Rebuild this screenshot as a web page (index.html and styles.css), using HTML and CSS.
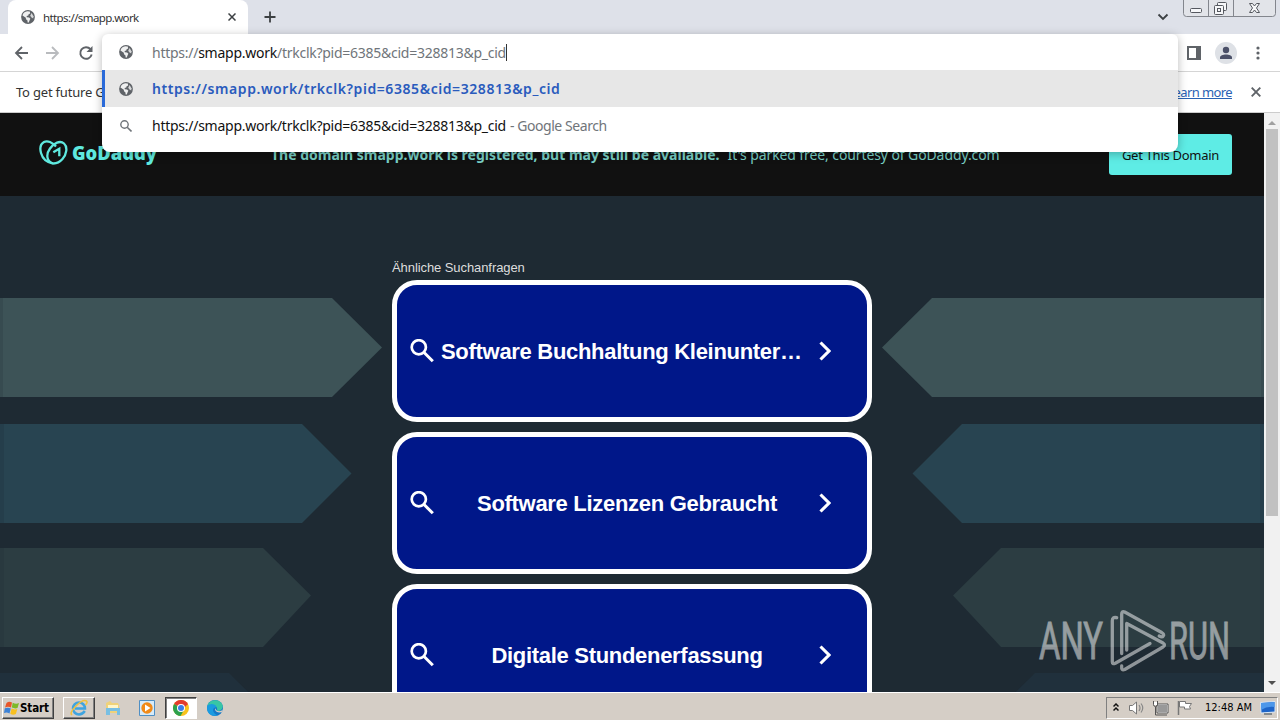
FILE: index.html
```html
<!DOCTYPE html>
<html lang="de">
<head>
    <meta charset="UTF-8">
    <meta name="viewport" content="width=device-width, initial-scale=1.0">
    <title>smapp.work</title>
    <link rel="stylesheet" href="styles.css">
</head>
<body>
    <!-- shared icons -->
    <svg class="defs" width="0" height="0">
        <symbol id="globe" viewBox="0 0 14 14">
            <circle cx="7" cy="7" r="6.9" fill="#5f6368"/>
            <path d="M6.2 1.3 8.8 1.6 9.2 3.4 7.6 4.3 7.3 5.6 5.6 6 5.8 7.2 8.1 7.4 9.4 8.7 8.7 10 7.8 12.6 6.6 12.6 6.5 10.6 5 9.2 4.8 7.7 1.5 5.4C2 3.3 3.9 1.5 6.2 1.3z" fill="#fff" fill-opacity=".9"/>
            <path d="M10.6 3 12.5 6.2 12.2 8.4 10.5 7.6 9.2 5.8z" fill="#fff" fill-opacity=".75"/>
        </symbol>
        <symbol id="search" viewBox="0 0 24 24">
            <circle cx="8.8" cy="8.3" r="7.1" fill="none" stroke="currentColor" stroke-width="2.7"/>
            <path d="M13.800 13.300l9 9" stroke="currentColor" stroke-width="3"/>
        </symbol>
        <symbol id="chevron" viewBox="0 0 12 20">
            <path d="M1.5 1.5 10 10 1.5 18.5" fill="none" stroke="currentColor" stroke-width="3.1"/>
        </symbol>
    </svg>

    <div class="browser">
        <div class="tabstrip">
            <div class="tab">
                <svg class="tab-icon" width="14" height="14"><use href="#globe"/></svg>
                <span class="tab-title">https://smapp.work</span>
                <svg class="tab-close" width="8" height="8" viewBox="0 0 8 8"><path d="M.5.5l7 7M7.5.5l-7 7" stroke="#3c4043" stroke-width="1.5"/></svg>
            </div>
            <svg class="new-tab" width="12" height="12" viewBox="0 0 12 12"><path d="M6 .5v11M.5 6h11" stroke="#3c4043" stroke-width="1.8"/></svg>
            <svg class="tab-search" width="12" height="8" viewBox="0 0 12 8"><path d="M1.5 1.5 6 6l4.500-4.500" fill="none" stroke="#3c4043" stroke-width="1.8"/></svg>
            <svg class="window-buttons" width="94" height="18" viewBox="0 0 94 18">
                <path d="M.5 0v13.500q0 3 3 3h86q3 0 3-3V0M25.500 0v16M50.500 0v16" fill="#e2e4e9" stroke="#83868d"/>
                <g fill="#f6f7f9" stroke="#55585f">
                    <rect x="7.500" y="8.500" width="11" height="4" rx="1"/>
                    <rect x="34.500" y="2.500" width="9" height="8" rx="1"/>
                    <rect x="31.500" y="5.500" width="9" height="9" rx="1"/>
                    <rect x="34.500" y="8.500" width="3" height="3"/>
                    <path d="M66.500 3.500h3l2 2.500 2-2.500h3l-3 4.500 3 4.500h-3l-2-2.500-2 2.500h-3l3-4.500z"/>
                </g>
            </svg>
        </div>

        <div class="toolbar">
            <svg class="nav-icons" width="80" height="16" viewBox="0 0 80 16">
                <path d="M14 8H2M8 2 2 8l6 6" fill="none" stroke="#5f6368" stroke-width="1.8"/>
                <path d="M32 8h12M38 2l6 6-6 6" fill="none" stroke="#b9bbbe" stroke-width="1.800"/>
                <path d="M76.500 4.200A5.800 5.800 0 1 0 77.700 9.500" fill="none" stroke="#5f6368" stroke-width="1.900"/>
                <path d="M78.500 1v6h-6z" fill="#5f6368"/>
            </svg>
            <div class="toolbar-right">
                <svg width="14" height="14" viewBox="0 0 14 14"><path d="M1 1h12v12H1z" fill="#fff" stroke="#5f6368" stroke-width="2"/><path d="M9 0h5v14H9z" fill="#5f6368"/></svg>
                <svg width="22" height="22" viewBox="0 0 22 22"><circle cx="11" cy="11" r="11" fill="#dee1e6"/><circle cx="11" cy="8" r="3.200" fill="#4b5068"/><path d="M5 17v-1.500c0-4 12-4 12 0V17z" fill="#4b5068"/></svg>
                <svg width="4" height="14" viewBox="0 0 4 14" fill="#5f6368"><circle cx="2" cy="2" r="1.600"/><circle cx="2" cy="7" r="1.600"/><circle cx="2" cy="12" r="1.600"/></svg>
            </div>
        </div>

        <div class="infobar">
            <span class="info-text">To get future G</span>
            <a class="learn-more" href="#">Learn more</a>
            <svg width="10" height="10" viewBox="0 0 10 10"><path d="M.7.7l8.600 8.600M9.300.7.7 9.300" stroke="#5f6368" stroke-width="1.900"/></svg>
        </div>

        <div class="viewport">
            <div class="page">
                <div class="banner">
                    <svg class="godaddy" width="120" height="28" viewBox="0 0 120 28">
                        <g fill="none" stroke="#5fe9df" stroke-width="2.300">
                            <path d="M14.500 23.500C7 21.500 7 14 11 8.500S21 0 25 3.500s2.500 11-1.500 15.500-9 4.500-9 4.500z"/>
                            <path d="M14 23.500C8 22.500 3.500 18.500 2 13S1.500 4 5 2s8.500.5 12 4.500"/>
                            <path d="M14.300 12.200l6-3.500v7.500"/>
                        </g>
                        <text class="godaddy-name" x="33" y="20" textLength="85" lengthAdjust="spacingAndGlyphs">GoDaddy</text>
                    </svg>
                    <p class="notice"><strong>The domain smapp.work is registered, but may still be available.</strong><span>It's parked free, courtesy of GoDaddy.com</span></p>
                    <a class="get-domain" href="#">Get This Domain</a>
                </div>

                <div class="content">
                    <svg class="arrows" width="1264" height="496" viewBox="0 0 1264 496">
                        <g id="left-arrows">
                            <path d="M0 102h332l50 49.500-50 49.500H0z" fill="#3d5357"/>
                            <path d="M0 228h302l49.500 49.500L302 327H0z" fill="#284451"/>
                            <path d="M0 352h263l48 47.500-48 51.500H0z" fill="#2c3d42"/>
                            <path d="M0 477h229l50 49.500H0z" fill="#20303c"/>
                            <path d="M0 102h3v99H0zM0 228h4v99H0zM0 352h4v99H0z" fill="#1e2931" fill-opacity=".18"/>
                        </g>
                        <use href="#left-arrows" transform="translate(1264 0) scale(-1 1)"/>
                    </svg>
                    <div class="related">
                        <div class="related-title">Ähnliche Suchanfragen</div>
                        <a class="card" href="#">
                            <svg width="24" height="24"><use href="#search"/></svg>
                            <span class="long">Software Buchhaltung Kleinunter…</span>
                            <svg width="12" height="20"><use href="#chevron"/></svg>
                        </a>
                        <a class="card" href="#">
                            <svg width="24" height="24"><use href="#search"/></svg>
                            <span>Software Lizenzen Gebraucht</span>
                            <svg width="12" height="20"><use href="#chevron"/></svg>
                        </a>
                        <a class="card" href="#">
                            <svg width="24" height="24"><use href="#search"/></svg>
                            <span>Digitale Stundenerfassung</span>
                            <svg width="12" height="20"><use href="#chevron"/></svg>
                        </a>
                    </div>
                </div>
            </div>
            <div class="scrollbar">
                <svg width="8" height="4" viewBox="0 0 8 4"><path d="M0 4l4-4 4 4z" fill="#a0a0a0"/></svg>
                <div class="thumb"></div>
                <svg class="down" width="8" height="4" viewBox="0 0 8 4"><path d="M0 0l4 4 4-4z" fill="#505050"/></svg>
            </div>
        </div>

        <!-- address bar with suggestions -->
        <div class="omnibox">
            <div class="suggestion input-row">
                <svg width="14" height="14"><use href="#globe"/></svg>
                <span class="url"><i>https://</i>smapp.work<i>/trkclk?pid=6385&amp;cid=328813&amp;p_cid</i></span><span class="caret"></span>
            </div>
            <div class="suggestion selected">
                <svg width="14" height="14"><use href="#globe"/></svg>
                <span class="url">https://smapp.work/trkclk?pid=6385&amp;cid=328813&amp;p_cid</span>
            </div>
            <div class="suggestion">
                <svg class="gray" width="12" height="12" viewBox="0 0 12 12"><circle cx="4.500" cy="4.500" r="3.700" fill="none" stroke="#70757a" stroke-width="1.400"/><path d="M7.200 7.200l4.300 4.300" stroke="#70757a" stroke-width="1.600"/></svg>
                <span class="url">https://smapp.work/trkclk?pid=6385&amp;cid=328813&amp;p_cid</span>
                <span class="hint">- Google Search</span>
            </div>
        </div>

        <!-- watermark -->
        <svg class="watermark" width="194" height="64" viewBox="0 0 194 64">
            <text x="1" y="50" textLength="64" lengthAdjust="spacingAndGlyphs">ANY</text>
            <text x="131" y="50" textLength="61" lengthAdjust="spacingAndGlyphs">RUN</text>
            <g fill="none" stroke="#fff" stroke-width="3.300" stroke-linejoin="round" stroke-linecap="round">
                <path d="M83.700 44.500V5q0-3.500 3-2l37 20.500q3 2 1.500 3.500-1 1.500-4 0"/>
                <path d="M78.700 8.700q-4.400-1-4.400 3v41q0 3 3 1.500L112 34.500"/>
                <path d="M83.700 57q-.5 5 3 3.500L125 38q3-2 0-4L88.700 14.500V41"/>
            </g>
        </svg>
    </div>

    <div class="taskbar">
        <div class="start">
            <svg width="16" height="16" viewBox="0 0 16 16">
                <path d="M2.500 3Q5 1 8 2.500L7 7.500Q4 6 1 7.500z" fill="#e8562a"/>
                <path d="M8.700 2.700Q12 4.500 15 3l-1.500 5Q11 9 7.800 7.600z" fill="#7db928"/>
                <path d="M.8 8.300Q4 7 6.800 8.400L5.500 13.500Q3 12-.0 13z" fill="#3d82d6"/>
                <path d="M7.600 8.600Q10.500 10 13.300 9l-1.400 5Q9 15.500 6.300 13.700z" fill="#f8c020"/>
            </svg>
            <span>Start</span>
        </div>
        <div class="task raised">
            <svg width="18" height="18" viewBox="0 0 18 18">
                <path d="M14.800 12Q12.500 15.500 9 15.500A6 6 0 1 1 15 9.500H5" fill="none" stroke="#3fa4df" stroke-width="2.500"/>
                <path d="M2 16Q-1 14 6 7T16.500 2Q18 3 15.500 6" fill="none" stroke="#f0c13c" stroke-width="1.500"/>
            </svg>
        </div>
        <div class="task">
            <svg width="16" height="16" viewBox="0 0 16 16">
                <path d="M1 3l4-2 2 2h6l1 2v8H1z" fill="#efd27a"/>
                <path d="M3 5h10v4H3z" fill="#fff6c9"/>
                <path d="M1 8h14v7h-3v-4H5v4H1z" fill="#78bfe3"/>
            </svg>
        </div>
        <div class="task">
            <svg width="16" height="16" viewBox="0 0 16 16">
                <path d="M.5.5h15v15H.5z" fill="#d7ebf9" stroke="#4f8fc4"/>
                <circle cx="8" cy="8" r="5.700" fill="#f18a18"/>
                <path d="M6 4.500v7L11.500 8z" fill="#fff"/>
            </svg>
        </div>
        <div class="task pressed">
            <svg width="16" height="16" viewBox="0 0 16 16">
                <circle cx="8" cy="8" r="8" fill="#f8c21c"/>
                <path d="M8 8 1.070 4A8 8 0 0 1 14.930 4z" fill="#e33b2e"/>
                <path d="M8 8 1.070 4A8 8 0 0 0 7.500 16L11 10z" fill="#2da14d"/>
                <path d="M8 4h6.930L11 8z" fill="#e33b2e"/>
                <circle cx="8" cy="8" r="4" fill="#fff"/>
                <circle cx="8" cy="8" r="3" fill="#3b7de8"/>
            </svg>
        </div>
        <div class="task">
            <svg width="16" height="16" viewBox="0 0 16 16">
                <circle cx="8" cy="8" r="8" fill="#1479c9"/>
                <path d="M.3 6C2-.5 12-2 15.300 4.500 17 9 13 12 10 10.500 11 7 8 4.500 4.500 5 2 5.200 1 6 .3 6z" fill="#38c6a5"/>
                <path d="M.3 6C2 3.500 8 3 9.500 7 4 8 5.500 13 10.500 15.600 3 17-1 12 .3 6z" fill="#1a9be0"/>
                <path d="M9.500 7.500c-1 1-.8 2.500.5 3.200 1.500.8 4 .8 6-1.200l-1 2.500c-3 1-6.500 0-7-2.500z" fill="#d5cec6"/>
            </svg>
        </div>
        <div class="tray">
            <svg class="tray-more" width="6" height="9" viewBox="0 0 6 9"><path d="M.5 3.500 3 1l2.500 2.500M.5 7.500 3 5l2.500 2.500" fill="none" stroke="#111" stroke-width="1.500"/></svg>
            <svg width="16" height="16" viewBox="0 0 16 16"><path d="M.5 5.500h3L7.500 2v12l-4-3.500h-3z" fill="#fff" stroke="#777"/><path d="M10 5q2 3 0 6M12 3.500q3.500 4.500 0 9" fill="none" stroke="#888" stroke-width="1.200"/></svg>
            <svg width="16" height="16" viewBox="0 0 16 16"><path d="M4.500 4.500h10v8h-10z" fill="#999" stroke="#fff"/><path d="M4 4h11v9H4zM6 15h8M2.500 7v8H6M.5 1v3.500q0 2 2 2t2-2V1" fill="none" stroke="#555"/><path d="M1 2h3v3H1z" fill="#fff"/></svg>
            <svg width="16" height="16" viewBox="0 0 16 16"><path d="M1.500 1v14" stroke="#777" stroke-width="1.500"/><path d="M2.500 1.500h6v2h6l-2 3 1 2.500h-6v-2h-5z" fill="#fff" stroke="#777"/></svg>
            <span class="clock">12:48 AM</span>
            <svg width="16" height="14" viewBox="0 0 16 14"><path d="M.5 1.500 15 .5V11L1 12z" fill="#1d64c8" stroke="#dce8f4"/><path d="M1 2l13.500-1v5Q7 5 1 9z" fill="#4c97ea"/><path d="M4 13h8" stroke="#345"/></svg>
        </div>
    </div>
</body>
</html>
```

FILE: styles.css
```css
* {
    box-sizing: border-box;
}
body {
    margin: 0;
    height: 720px;
    overflow: hidden;
    display: flex;
    flex-direction: column;
    font-family: "Noto Sans", sans-serif;
    font-size: 12px;
    color: #333;
}
svg {
    display: block;
    flex: none;
}
.defs {
    position: absolute;
}
.browser {
    position: relative;
    height: 692px;
    display: flex;
    flex-direction: column;
}

/* Tabs */
.tabstrip {
    height: 34px;
    flex: none;
    display: flex;
    align-items: center;
    background: #dee1e9;
    padding: 0 3px 0 8px;
}
.tab {
    width: 240px;
    height: 34px;
    display: flex;
    align-items: center;
    padding: 0 12px 0 13px;
    background: #fff;
    border-radius: 8px 8px 0 0;
}
.tab-title {
    margin-left: 8px;
    flex: 1;
    font-size: 11.5px;
    white-space: nowrap;
    letter-spacing: -0.6px;
}
.new-tab {
    margin-left: 16px;
}
.tab-search {
    margin-left: auto;
    margin-right: 14px;
}
.window-buttons {
    align-self: flex-start;
}

/* Toolbar */
.toolbar {
    height: 38px;
    flex: none;
    display: flex;
    align-items: center;
    justify-content: space-between;
    padding: 0 20px 0 14px;
    background: #fff;
    border-bottom: 1px solid #d5d5d5;
}
.toolbar-right {
    display: flex;
    align-items: center;
    gap: 19px;
}
.toolbar-right svg:first-child {
    margin-right: -5px;
}
.infobar {
    height: 41px;
    flex: none;
    display: flex;
    align-items: center;
    padding: 0 19px 0 16px;
    background: #fff;
    border-bottom: 1px solid #ccc;
}
.info-text {
    font-size: 13px;
    letter-spacing: -0.2px;
}
.learn-more {
    margin-left: auto;
    margin-right: 19px;
    font-size: 13px;
    letter-spacing: -0.6px;
    color: #2a62b4;
}

/* Address bar dropdown */
.omnibox {
    position: absolute;
    left: 102px;
    top: 34px;
    width: 1076px;
    height: 118px;
    background: #fff;
    border-radius: 6px 6px 8px 8px;
    box-shadow: 0 2px 10px rgba(0, 0, 0, 0.28);
}
.suggestion {
    height: 37px;
    display: flex;
    align-items: center;
    padding-left: 17px;
    font-size: 14px;
    color: #111;
    white-space: nowrap;
}
.suggestion .url {
    margin-left: 19px;
    letter-spacing: -0.26px;
}
.suggestion i {
    font-style: normal;
    color: #70757a;
}
.input-row {
    height: 36px;
}
.selected {
    background: #e7e7e7;
    border-left: 3px solid #2a6ad9;
    padding-left: 14px;
}
.selected .url {
    color: #2a5bbd;
    font-weight: 600;
    letter-spacing: 0.57px;
}
.suggestion .gray {
    margin: 0 1px;
}
.hint {
    margin-left: 4px;
    color: #70757a;
    letter-spacing: -0.43px;
}
.caret {
    width: 1px;
    height: 17px;
    background: #333;
}

/* Parked page */
.viewport {
    flex: 1;
    display: flex;
    min-height: 0;
    overflow: hidden;
}
.page {
    width: 1264px;
}
.banner {
    height: 83px;
    display: flex;
    align-items: center;
    padding: 0 32px 0 39px;
    background: #111;
    color: #78cfc5;
    white-space: nowrap;
}
.godaddy {
    margin-top: -2px;
}
.godaddy-name {
    font-family: "Open Sans", sans-serif;
    font-weight: 800;
    font-size: 20px;
    fill: #5fe9df;
}
.notice {
    margin: 0 0 0 112px;
    font-size: 14px;
}
.notice strong {
    margin-right: 8px;
}
.notice span {
    letter-spacing: -0.1px;
}
.get-domain {
    margin-left: auto;
    width: 123px;
    height: 41px;
    line-height: 43px;
    text-align: center;
    background: #5eece5;
    border-radius: 3px;
    color: #111;
    font-size: 13px;
    letter-spacing: -0.27px;
    text-decoration: none;
}
.content {
    position: relative;
    height: 496px;
    overflow: hidden;
    background: #1e2a33;
    padding-top: 64px;
}
.arrows {
    position: absolute;
    left: 0;
    top: 0;
}
.related {
    position: relative;
    width: 480px;
    margin: 0 auto;
    font-family: "Liberation Sans", sans-serif;
}
.related-title {
    height: 20px;
    line-height: 16px;
    font-size: 13px;
    color: #ddd;
    letter-spacing: -0.08px;
}
.card {
    height: 142px;
    margin-bottom: 10px;
    display: flex;
    align-items: center;
    padding: 0 36px 0 13px;
    background: #001789;
    border: 5px solid #fff;
    border-radius: 25px;
    color: #fff;
    font-size: 22px;
    font-weight: bold;
    letter-spacing: -0.3px;
    text-decoration: none;
}
.card span {
    flex: 1;
    text-align: center;
    margin: 2px 6px 0 7px;
    white-space: nowrap;
}
.card .long {
    text-align: left;
}
.scrollbar {
    width: 16px;
    display: flex;
    flex-direction: column;
    align-items: center;
    background: #f1f1f1;
    padding: 8px 0 7px;
}
.thumb {
    width: 12px;
    height: 387px;
    margin-top: 4px;
    background: #c1c1c1;
}
.down {
    margin-top: auto;
}
.watermark {
    position: absolute;
    left: 1038px;
    top: 609px;
    opacity: 0.5;
    overflow: visible;
}
.watermark text {
    font-family: "Roboto", sans-serif;
    font-size: 52px;
    fill: #fff;
    stroke: #fff;
    stroke-width: 0.8px;
}

/* Taskbar */
.taskbar {
    height: 28px;
    display: flex;
    align-items: center;
    padding: 2px 2px 0;
    background: #d5cec6;
    border-top: 1px solid #fff;
    font-family: "DejaVu Sans Condensed", "DejaVu Sans", sans-serif;
    color: #000;
}
.start {
    width: 52px;
    height: 22px;
    display: flex;
    align-items: center;
    padding-left: 1px;
    font-size: 11.5px;
    font-weight: bold;
    font-stretch: condensed;
    letter-spacing: -0.1px;
    border: 1px solid;
    border-color: #fff #404040 #404040 #fff;
    box-shadow: inset -1px -1px #808080;
    margin-right: 8px;
}
.task {
    width: 32px;
    height: 22px;
    margin-left: 2px;
    display: flex;
    align-items: center;
    justify-content: center;
}
.raised {
    border: 1px solid;
    border-color: #fff #404040 #404040 #fff;
    box-shadow: inset -1px -1px #808080;
    margin-left: 1px;
}
.pressed {
    background: #fff;
    border: 1px solid;
    border-color: #404040 #fff #fff #404040;
    box-shadow: inset 1px 1px #808080;
}
.tray {
    width: 172px;
    height: 22px;
    margin-left: auto;
    display: flex;
    align-items: center;
    gap: 8px;
    padding: 0 1px 0 6px;
    border: 1px solid;
    border-color: #808080 #fff #fff #808080;
}
.tray-more {
    margin-right: 2px;
}
.clock {
    margin-left: auto;
    font-size: 11px;
    font-stretch: condensed;
    white-space: nowrap;
}
```
